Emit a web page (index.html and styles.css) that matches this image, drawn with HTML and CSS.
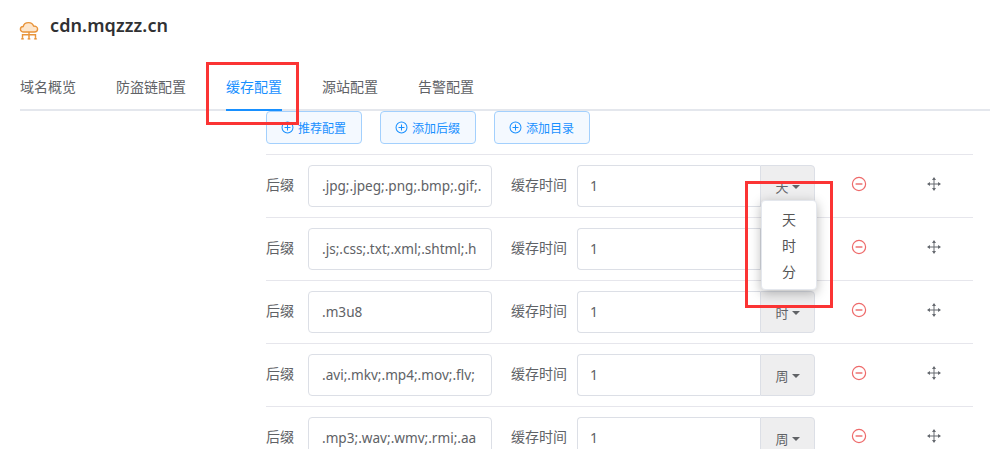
FILE: index.html
```html
<!DOCTYPE html>
<html lang="zh">
<head>
<meta charset="utf-8">
<title>cdn.mqzzz.cn</title>
<link rel="stylesheet" href="styles.css">
</head>
<body>
<div class="page">
  <header class="head">
    <svg class="logo" viewBox="0 0 20 20" width="20" height="20" fill="none" stroke="#e8943a" stroke-width="1.4">
      <path fill="#fde6cc" d="M5 12H4.6C3 12 1.4 10.8 1.4 9.2 1.4 7.7 2.7 6.6 4.2 6.5 4.7 4.3 6.8 2.6 9.6 2.6c2.4 0 4.3 1.4 5 3.4 1.9 0 4 1.2 4 3.1 0 1.7-1.5 2.9-3.2 2.9z"/>
      <path d="M10 12v3M3.5 17v-2.2h13V17M10 14.8V17"/>
      <path fill="#e8943a" stroke-width=".6" d="M2.3 19.2l1.2-2.4 1.2 2.4zM8.8 19.2l1.2-2.4 1.2 2.4zM15.3 19.2l1.2-2.4 1.2 2.4z"/>
    </svg>
    <h1 class="title">cdn.mqzzz.cn</h1>
  </header>

  <nav class="tabs">
    <a class="tab">域名概览</a>
    <a class="tab">防盗链配置</a>
    <a class="tab active">缓存配置</a>
    <a class="tab">源站配置</a>
    <a class="tab">告警配置</a>
  </nav>

  <section class="panel">
    <div class="actions">
      <button class="btn"><svg class="plus" viewBox="0 0 14 14" width="13" height="13"><circle cx="7" cy="7" r="5.9"/><path d="M7 3.8v6.4M3.8 7h6.4"/></svg>推荐配置</button>
      <button class="btn"><svg class="plus" viewBox="0 0 14 14" width="13" height="13"><circle cx="7" cy="7" r="5.9"/><path d="M7 3.8v6.4M3.8 7h6.4"/></svg>添加后缀</button>
      <button class="btn"><svg class="plus" viewBox="0 0 14 14" width="13" height="13"><circle cx="7" cy="7" r="5.9"/><path d="M7 3.8v6.4M3.8 7h6.4"/></svg>添加目录</button>
    </div>

    <div class="row">
      <span class="label">后缀</span>
      <div class="field">.jpg;.jpeg;.png;.bmp;.gif;.</div>
      <span class="label time">缓存时间</span>
      <div class="group"><div class="num">1</div><div class="unit">天<i class="caret"></i></div></div>
      <svg class="minus" viewBox="0 0 16 16" width="16" height="16"><circle cx="8" cy="8" r="6.6"/><path d="M4.6 8h6.8"/></svg>
      <svg class="move" viewBox="0 0 16 16" width="16" height="16"><path class="ln" d="M8 2v12M2 8h12"/><path d="M8 1l2 3H6zM8 15l2-3H6zM1 8l3-2v4zM15 8l-3-2v4z"/></svg>
    </div>
    <div class="row">
      <span class="label">后缀</span>
      <div class="field">.js;.css;.txt;.xml;.shtml;.h</div>
      <span class="label time">缓存时间</span>
      <div class="group"><div class="num">1</div><div class="unit"><i class="caret"></i></div></div>
      <svg class="minus" viewBox="0 0 16 16" width="16" height="16"><circle cx="8" cy="8" r="6.6"/><path d="M4.6 8h6.8"/></svg>
      <svg class="move" viewBox="0 0 16 16" width="16" height="16"><path class="ln" d="M8 2v12M2 8h12"/><path d="M8 1l2 3H6zM8 15l2-3H6zM1 8l3-2v4zM15 8l-3-2v4z"/></svg>
    </div>
    <div class="row">
      <span class="label">后缀</span>
      <div class="field">.m3u8</div>
      <span class="label time">缓存时间</span>
      <div class="group"><div class="num">1</div><div class="unit">时<i class="caret"></i></div></div>
      <svg class="minus" viewBox="0 0 16 16" width="16" height="16"><circle cx="8" cy="8" r="6.6"/><path d="M4.6 8h6.8"/></svg>
      <svg class="move" viewBox="0 0 16 16" width="16" height="16"><path class="ln" d="M8 2v12M2 8h12"/><path d="M8 1l2 3H6zM8 15l2-3H6zM1 8l3-2v4zM15 8l-3-2v4z"/></svg>
    </div>
    <div class="row">
      <span class="label">后缀</span>
      <div class="field">.avi;.mkv;.mp4;.mov;.flv;</div>
      <span class="label time">缓存时间</span>
      <div class="group"><div class="num">1</div><div class="unit">周<i class="caret"></i></div></div>
      <svg class="minus" viewBox="0 0 16 16" width="16" height="16"><circle cx="8" cy="8" r="6.6"/><path d="M4.6 8h6.8"/></svg>
      <svg class="move" viewBox="0 0 16 16" width="16" height="16"><path class="ln" d="M8 2v12M2 8h12"/><path d="M8 1l2 3H6zM8 15l2-3H6zM1 8l3-2v4zM15 8l-3-2v4z"/></svg>
    </div>
    <div class="row">
      <span class="label">后缀</span>
      <div class="field">.mp3;.wav;.wmv;.rmi;.aa</div>
      <span class="label time">缓存时间</span>
      <div class="group"><div class="num">1</div><div class="unit">周<i class="caret"></i></div></div>
      <svg class="minus" viewBox="0 0 16 16" width="16" height="16"><circle cx="8" cy="8" r="6.6"/><path d="M4.6 8h6.8"/></svg>
      <svg class="move" viewBox="0 0 16 16" width="16" height="16"><path class="ln" d="M8 2v12M2 8h12"/><path d="M8 1l2 3H6zM8 15l2-3H6zM1 8l3-2v4zM15 8l-3-2v4z"/></svg>
    </div>
  </section>

  <ul class="menu">
    <li>天</li>
    <li>时</li>
    <li>分</li>
  </ul>
  <div class="mark mark-tab"></div>
  <div class="mark mark-menu"></div>
</div>
</body>
</html>
```
FILE: styles.css
```css
* { box-sizing: border-box; }
html, body { margin: 0; height: 100%; overflow: hidden; background: #fff; }
body { font-family: "Noto Sans", "Noto Sans CJK SC", sans-serif; font-size: 14px; color: #606266; }
.page { position: relative; width: 998px; height: 449px; overflow: hidden; padding: 0 8px 0 20px; }

.head { display: flex; align-items: center; height: 63px; padding-bottom: 13px; }
.logo { margin-right: 11px; margin-top: 10px; flex: none; margin-left: -1px; }
.title { margin: 0; font-size: 18px; font-weight: 600; letter-spacing: .1px; color: #303133; line-height: 24px; }

.tabs { display: flex; gap: 40px; height: 48px; border-bottom: 2px solid #e4e7ed; }
.tab { display: block; height: 48px; line-height: 48px; font-size: 14px; color: #606266; }
.tab.active { color: #1890ff; border-bottom: 2px solid #1890ff; }

.panel { width: 707px; margin-left: 246px; }
.actions { display: flex; gap: 18px; height: 43px; }
.btn { width: 96px; height: 33px; padding: 0; display: flex; align-items: center; justify-content: center; gap: 4px; font: inherit; font-size: 12px; color: #1890ff; background: #f4f9ff; border: 1px solid #a3d0fd; border-radius: 4px; }
.plus { fill: none; stroke: #1890ff; stroke-width: 1.1; flex: none; margin-left: -1px; }

.row { display: flex; align-items: flex-start; height: 63px; padding-top: 10px; border-top: 1px solid #e6e6ec; }
.label { width: 42px; flex: none; font-size: 14px; line-height: 40px; color: #606266; }
.label.time { width: 66px; margin-left: 19px; }
.field { width: 184px; height: 42px; flex: none; padding-left: 13px; font-size: 13.6px; line-height: 40px; white-space: nowrap; overflow: hidden; border: 1px solid #dcdfe6; border-radius: 4px; color: #606266; }
.group { display: flex; width: 238px; height: 42px; flex: none; }
.num { flex: 1; padding-left: 12px; line-height: 40px; border: 1px solid #dcdfe6; border-right: 0; border-radius: 4px 0 0 4px; }
.unit { width: 55px; display: flex; align-items: center; justify-content: center; gap: 3px; font-size: 13px; background: #eeeeef; border: 1px solid #dcdfe6; border-radius: 0 4px 4px 0; }
.caret { width: 0; height: 0; border: 4.5px solid transparent; border-top-color: #606266; border-bottom: 0; margin-top: 1px; }
.minus { flex: none; margin: 11px 0 0 36px; fill: none; stroke: #ee6a6a; stroke-width: 1.2; }
.minus path { stroke: #f08a8a; stroke-width: 1.8; }
.move { flex: none; margin: 11px 0 0 60px; transform: translateX(-1px); fill: #666a70; }
.move .ln { fill: none; stroke: #666a70; stroke-width: 1; }

.menu { position: absolute; left: 761px; top: 200px; width: 56px; height: 90px; margin: 0; padding: 6px 0; list-style: none; background: #fff; border: 1px solid #e4e7ed; border-radius: 4px; box-shadow: 0 3px 12px rgba(0, 0, 0, .28); z-index: 2; }
.menu li { height: 26px; line-height: 26px; text-align: center; font-size: 14px; color: #555; }

.mark { position: absolute; border: 3px solid #fb3434; z-index: 3; pointer-events: none; }
.mark-tab { left: 206px; top: 62px; width: 93px; height: 63px; }
.mark-menu { left: 745px; top: 181px; width: 88px; height: 127px; }
```
